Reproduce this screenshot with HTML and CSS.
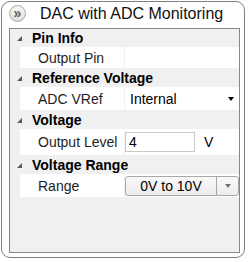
FILE: index.html
```html
<!doctype html>
<html lang="en">
<head>
  <meta charset="UTF-8">
  <title>DAC with ADC Monitoring</title>
  <link rel="stylesheet" href="styles.css">
</head>
<body>
  <div class="window">
    <div class="head">
      <div class="collapse">&raquo;</div>
      <div class="title">DAC with ADC Monitoring</div>
    </div>
    <div class="grid">
      <div class="group">
        <div class="group-name"><span class="arrow"></span>Pin Info</div>
        <div class="row short">
          <div class="label">Output Pin</div>
          <div class="value"></div>
        </div>
      </div>
      <div class="group">
        <div class="group-name"><span class="arrow"></span>Reference Voltage</div>
        <div class="row">
          <div class="label">ADC VRef</div>
          <div class="value">
            <div class="select">
              <span>Internal</span>
              <span class="caret"></span>
            </div>
          </div>
        </div>
      </div>
      <div class="group">
        <div class="group-name"><span class="arrow"></span>Voltage</div>
        <div class="row tall">
          <div class="label">Output Level</div>
          <div class="value">
            <div class="input">4</div>
            <span class="unit">V</span>
          </div>
        </div>
      </div>
      <div class="group">
        <div class="group-name"><span class="arrow"></span>Voltage Range</div>
        <div class="row">
          <div class="label">Range</div>
          <div class="value">
            <div class="combo">
              <div class="combo-text">0V to 10V</div>
              <div class="combo-btn"><span class="caret light"></span></div>
            </div>
          </div>
        </div>
      </div>
    </div>
  </div>
</body>
</html>
```

FILE: styles.css
```css
body {
    margin: 0;
    background: #fff;
    font-family: "Liberation Sans", Arial, sans-serif;
    color: #000;
}
.window {
    box-sizing: border-box;
    width: 244px;
    height: 257px;
    margin: 1px 0 0 1px;
    border: 1px solid #808080;
    border-radius: 9px;
    padding: 0 4px 4px 7px;
    display: flex;
    flex-direction: column;
}
.head {
    height: 26px;
    display: flex;
    align-items: center;
}
.collapse {
    box-sizing: border-box;
    width: 17px;
    height: 17px;
    margin-top: -3px;
    border: 1px solid #a8a8a8;
    border-radius: 50%;
    background: linear-gradient(#f6f6f6, #dedede);
    color: #606060;
    font-size: 14px;
    font-weight: bold;
    line-height: 14px;
    text-align: center;
}
.title {
    margin-left: 14px;
    margin-top: -3px;
    font-size: 16px;
    color: #111;
}
.grid {
    flex: 1;
    border: 1px solid #828790;
    background: #f0f0f0;
    font-size: 14px;
}
.group-name {
    height: 18px;
    padding-top: 1px;
    display: flex;
    align-items: center;
    font-weight: bold;
}
.group:first-child .group-name {
    padding-top: 0;
}
.arrow {
    width: 0;
    height: 0;
    margin: 0 10px 0 7px;
    border-left: 5px solid transparent;
    border-bottom: 5px solid #595959;
}
.row {
    height: 23px;
    margin-left: 10px;
    display: flex;
}
.row.short {
    height: 21px;
}
.row.tall {
    height: 26px;
}
.label {
    width: 104px;
    background: #fff;
    padding-left: 18px;
    box-sizing: border-box;
    display: flex;
    align-items: center;
    color: #1e1e1e;
}
.value {
    flex: 1;
    margin-left: 1px;
    background: #fff;
    display: flex;
    align-items: center;
}
.select {
    flex: 1;
    display: flex;
    align-items: center;
    justify-content: space-between;
    padding: 0 5px 0 5px;
}
.caret {
    width: 0;
    height: 0;
    border-left: 3px solid transparent;
    border-right: 3px solid transparent;
    border-top: 4px solid #000;
}
.caret.light {
    border-top-color: #707070;
}
.input {
    box-sizing: border-box;
    width: 70px;
    height: 20px;
    border: 1px solid #c8c8c8;
    padding-left: 3px;
    line-height: 18px;
}
.unit {
    margin-left: 9px;
}
.combo {
    flex: 1;
    box-sizing: border-box;
    height: 20px;
    display: flex;
    border: 1px solid #a8a8a8;
    border-radius: 3px;
    background: linear-gradient(#fafafa, #ececec);
}
.combo-text {
    flex: 1;
    text-align: center;
    line-height: 18px;
    border-right: 1px solid #a8a8a8;
}
.combo-btn {
    width: 21px;
    display: flex;
    align-items: center;
    justify-content: center;
}
```
